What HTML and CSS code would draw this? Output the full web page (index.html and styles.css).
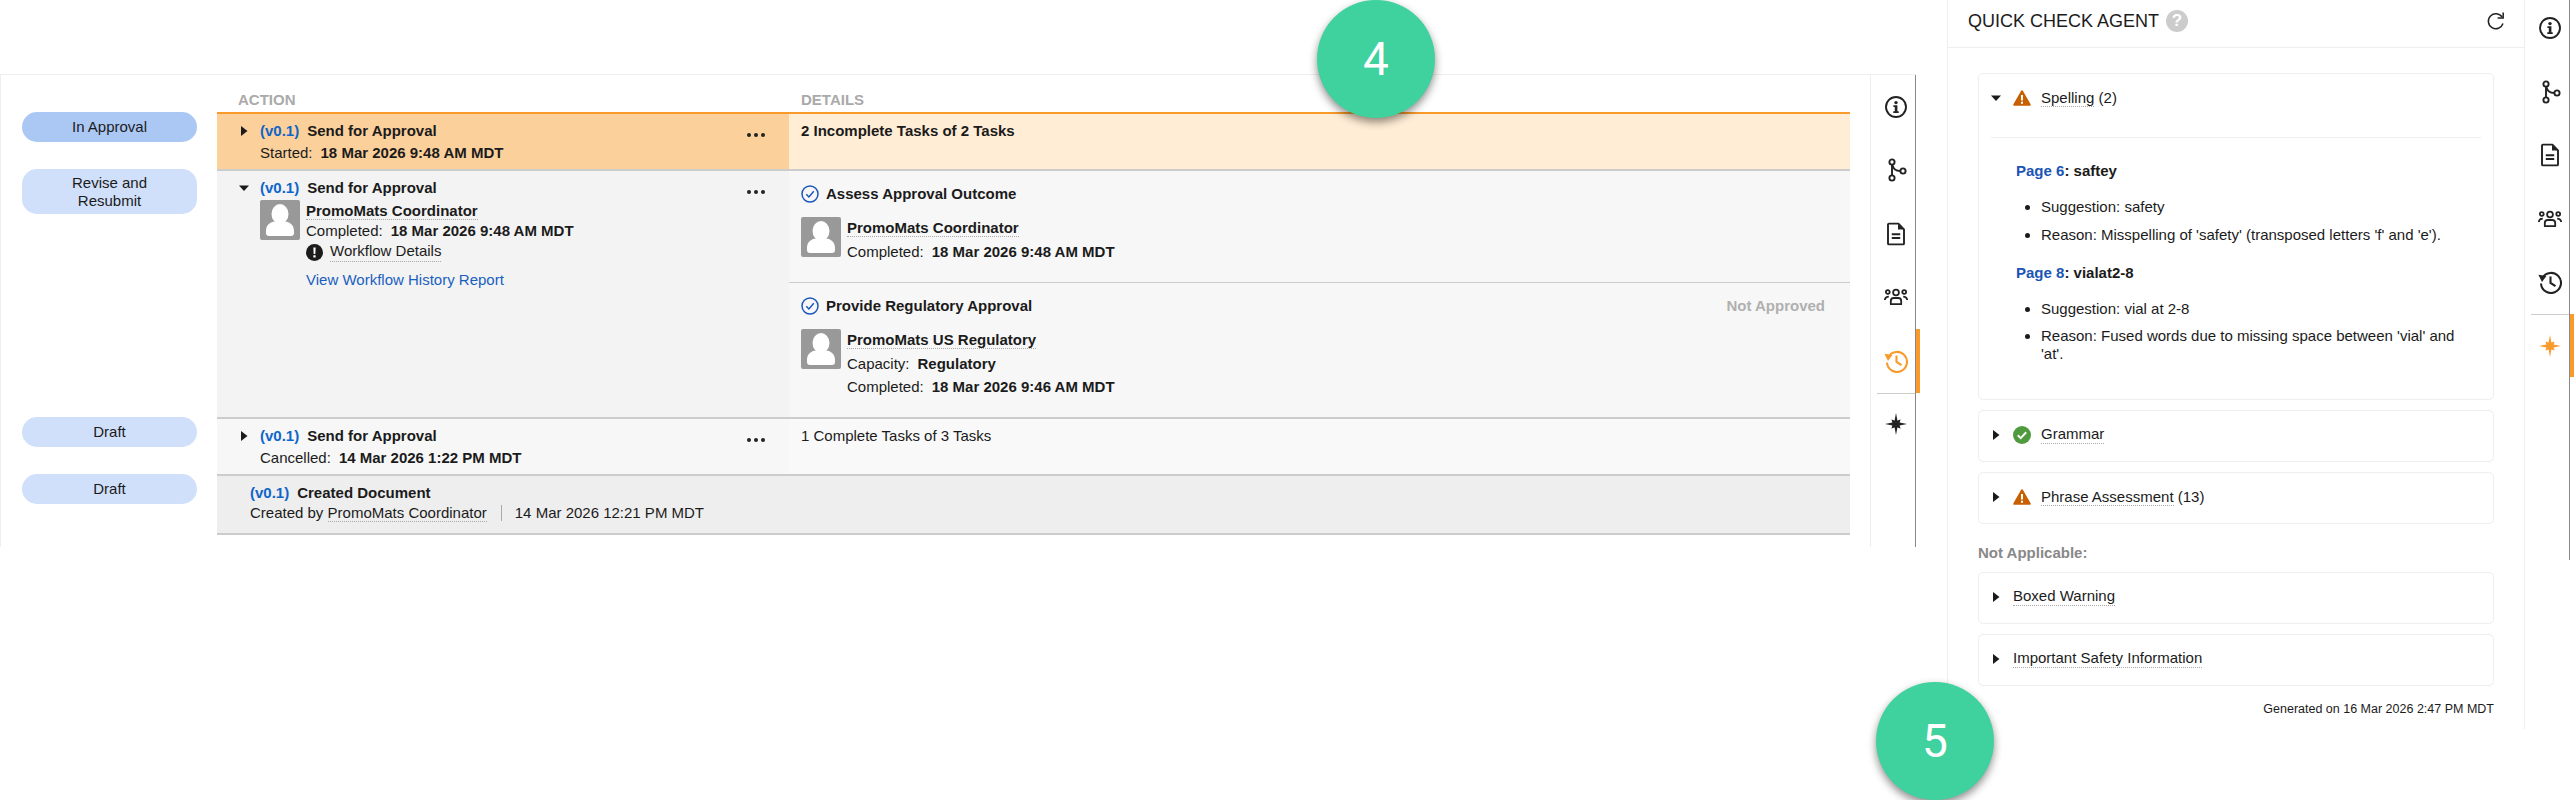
FILE: index.html
```html
<!DOCTYPE html>
<html lang="en">
<head>
<meta charset="utf-8">
<title>Document workflow timeline</title>
<link rel="stylesheet" href="styles.css">
</head>
<body>
<svg class="defs" width="0" height="0" aria-hidden="true">
  <defs>
    <symbol id="i-info" viewBox="0 0 24 24"><circle cx="12" cy="12" r="10" fill="none" stroke="currentColor" stroke-width="1.9"/><circle cx="12" cy="7.6" r="1.7" fill="currentColor"/><path d="M9.4 10.300h4v6h1.300v1.700H9.300v-1.700h1.500v-4.300H9.400z" fill="currentColor"/></symbol>
    <symbol id="i-branch" viewBox="0 0 24 24"><g fill="none" stroke="currentColor" stroke-width="1.900"><circle cx="8" cy="4" r="2.600"/><circle cx="8" cy="20" r="2.600"/><circle cx="19" cy="13" r="2.600"/><path d="M8 6.600v10.800"/><path d="M8.400 6.800c.6 3.600 3 6 8 6.200"/></g></symbol>
    <symbol id="i-doc" viewBox="0 0 24 24"><path d="M5 1.600h9.400L20 7.400v14a1 1 0 0 1-1 1H5a1 1 0 0 1-1-1v-18.800a1 1 0 0 1 1-1z" fill="none" stroke="currentColor" stroke-width="1.900" stroke-linejoin="round"/><path d="M14 2v5.600h5.600z" fill="currentColor"/><path d="M7.800 12.200h8.400M7.800 16h8.400" stroke="currentColor" stroke-width="1.900"/></symbol>
    <symbol id="i-people" viewBox="0 0 24 24"><g fill="none" stroke="currentColor" stroke-width="1.800"><circle cx="12" cy="7.500" r="2.900"/><circle cx="3.800" cy="7" r="1.900"/><circle cx="20.200" cy="7" r="1.900"/><path d="M6.800 19.200v-3.200c0-1.800 1.500-3 3-3h4.400c1.500 0 3 1.200 3 3v3.200z" stroke-linejoin="round"/><path d="M.8 15c.3-2.200 1.600-3.400 4-3.400M23.200 15c-.3-2.200-1.600-3.400-4-3.400"/></g></symbol>
    <symbol id="i-history" viewBox="0 0 24 24"><path d="M4.400 7.800A10 10 0 1 1 3 13.500" fill="none" stroke="currentColor" stroke-width="2.100"/><path d="M.4 4.800l8 1.200-4.400 6z" fill="currentColor"/><path d="M12.500 6.500v6.500l5 3.200" fill="none" stroke="currentColor" stroke-width="2.100"/></symbol>
    <symbol id="i-star" viewBox="0 0 24 24"><path d="M12 1l1.400 7.400 3.200-1-1 3.200L23 12l-7.400 1.400 1 3.200-3.200-1L12 23l-1.400-7.400-3.200 1 1-3.200L1 12l7.400-1.400-1-3.200 3.200 1z" fill="currentColor"/></symbol>
    <symbol id="i-check" viewBox="0 0 18 18"><circle cx="9" cy="9" r="8" fill="none" stroke="currentColor" stroke-width="1.500"/><path d="M5.300 9.200l2.600 2.700 4.900-5.600" fill="none" stroke="currentColor" stroke-width="1.500"/></symbol>
    <symbol id="i-user" viewBox="0 0 40 40"><rect width="40" height="40" rx="2" fill="#999"/><ellipse cx="20" cy="14" rx="8.500" ry="10" fill="#fff"/><path d="M6 31c0-6 4-9 9-9.500 3 2 7 2 10 0 5 .5 9 3.500 9 9.500v2c0 2-1 3-3 3H9c-2 0-3-1-3-3z" fill="#fff"/></symbol>
    <symbol id="i-warn" viewBox="0 0 18 16"><path d="M9 .3c.5 0 .8.3 1 .7l7.600 13.200c.4.800 0 1.500-.9 1.500H1.300c-.9 0-1.300-.7-.9-1.500L8 1c.2-.4.500-.7 1-.7z" fill="#c85f00"/><path d="M8 5h2v5.500H8zM8 11.700h2v2H8z" fill="#fff"/></symbol>
    <symbol id="i-ok" viewBox="0 0 18 18"><circle cx="9" cy="9" r="9" fill="#4e9a3c"/><path d="M4.800 9.300l2.900 2.800 5.500-5.800" fill="none" stroke="#fff" stroke-width="2"/></symbol>
    <symbol id="i-alert" viewBox="0 0 18 18"><circle cx="9" cy="9" r="9" fill="#1b1b1b"/><path d="M7.800 3.800h2.400l-.3 6.800H8.100zM7.800 12h2.400v2.300H7.800z" fill="#fff"/></symbol>
    <symbol id="i-right" viewBox="0 0 10 10"><path d="M2 0l6.500 5L2 10z" fill="currentColor"/></symbol>
    <symbol id="i-down" viewBox="0 0 10 10"><path d="M0 2.500h10L5 8z" fill="currentColor"/></symbol>
  </defs>
</svg>

<div class="page">
  <section class="history">
    <div class="timeline">
      <div class="heads">
        <div class="head head-action">ACTION</div>
        <div class="head head-details">DETAILS</div>
      </div>

      <div class="row">
        <div class="status"><span class="pill pill-active">In Approval</span></div>
        <div class="row-body row-current">
          <div class="action">
            <div class="action-title"><svg class="caret"><use href="#i-right"/></svg><b class="ver">(v0.1)</b><b>Send for Approval</b></div>
            <div class="action-sub">Started:<b>18 Mar 2026 9:48 AM MDT</b></div>
            <span class="dots"><i></i><i></i><i></i></span>
          </div>
          <div class="details summary"><b>2 Incomplete Tasks of 2 Tasks</b></div>
        </div>
      </div>

      <div class="row">
        <div class="status"><span class="pill pill-double">Revise and<br>Resubmit</span></div>
        <div class="row-body row-open">
          <div class="action">
            <div class="action-title"><svg class="caret caret-down"><use href="#i-down"/></svg><b class="ver">(v0.1)</b><b>Send for Approval</b></div>
            <div class="person person-action">
              <svg class="avatar"><use href="#i-user"/></svg>
              <div class="person-lines">
                <div><b class="dotted">PromoMats Coordinator</b></div>
                <div class="tight">Completed:<b class="val">18 Mar 2026 9:48 AM MDT</b></div>
                <div class="tight wf"><svg class="alert"><use href="#i-alert"/></svg><span class="dotted dotted-low">Workflow Details</span></div>
                <a class="link" href="#">View Workflow History Report</a>
              </div>
            </div>
            <span class="dots"><i></i><i></i><i></i></span>
          </div>
          <div class="details tasks">
            <div class="task">
              <div class="task-title"><svg class="check"><use href="#i-check"/></svg><b>Assess Approval Outcome</b></div>
              <div class="person">
                <svg class="avatar"><use href="#i-user"/></svg>
                <div class="person-lines">
                  <div><b class="dotted">PromoMats Coordinator</b></div>
                  <div class="roomy">Completed:<b class="val">18 Mar 2026 9:48 AM MDT</b></div>
                </div>
              </div>
            </div>
            <div class="task task-last">
              <div class="task-title"><svg class="check"><use href="#i-check"/></svg><b>Provide Regulatory Approval</b><b class="verdict">Not Approved</b></div>
              <div class="person">
                <svg class="avatar"><use href="#i-user"/></svg>
                <div class="person-lines">
                  <div><b class="dotted">PromoMats US Regulatory</b></div>
                  <div class="roomy">Capacity:<b class="val">Regulatory</b></div>
                  <div class="snug">Completed:<b class="val">18 Mar 2026 9:46 AM MDT</b></div>
                </div>
              </div>
            </div>
          </div>
        </div>
      </div>

      <div class="row">
        <div class="status"><span class="pill">Draft</span></div>
        <div class="row-body row-past">
          <div class="action">
            <div class="action-title"><svg class="caret"><use href="#i-right"/></svg><b class="ver">(v0.1)</b><b>Send for Approval</b></div>
            <div class="action-sub">Cancelled:<b>14 Mar 2026 1:22 PM MDT</b></div>
            <span class="dots"><i></i><i></i><i></i></span>
          </div>
          <div class="details summary">1 Complete Tasks of 3 Tasks</div>
        </div>
      </div>

      <div class="row">
        <div class="status"><span class="pill">Draft</span></div>
        <div class="row-body row-created">
          <div class="created">
            <div><b class="ver ver-created">(v0.1)</b><b>Created Document</b></div>
            <div class="created-sub">Created by <span class="dotted">PromoMats Coordinator</span><span class="pipe"></span>14 Mar 2026 12:21 PM MDT</div>
          </div>
        </div>
      </div>
    </div>

    <nav class="rail rail-history">
      <a class="rail-item"><svg><use href="#i-info"/></svg></a>
      <a class="rail-item"><svg><use href="#i-branch"/></svg></a>
      <a class="rail-item"><svg><use href="#i-doc"/></svg></a>
      <a class="rail-item"><svg><use href="#i-people"/></svg></a>
      <a class="rail-item rail-active"><svg><use href="#i-history"/></svg></a>
      <a class="rail-item rail-split"><svg><use href="#i-star"/></svg></a>
    </nav>
  </section>

  <section class="agent">
    <header class="agent-head">
      <span class="agent-title">QUICK CHECK AGENT</span>
      <span class="help">?</span>
      <svg class="refresh" viewBox="0 0 20 20"><path d="M16.200 6.200A7.500 7.500 0 1 0 17 12.500" fill="none" stroke="#222" stroke-width="1.500"/><path d="M17.200 1.500v5.600h-5.600" fill="none" stroke="#222" stroke-width="1.500"/></svg>
    </header>
    <div class="agent-body">
      <div class="card">
        <div class="card-head"><svg class="caret-card caret-open"><use href="#i-down"/></svg><svg class="state state-warn"><use href="#i-warn"/></svg><span><span class="dotted">Spelling</span> (2)</span></div>
        <div class="card-content">
          <div class="finding"><b><span class="page-no">Page 6</span>: saftey</b></div>
          <ul class="notes">
            <li>Suggestion: safety</li>
            <li>Reason: Misspelling of 'safety' (transposed letters 'f' and 'e').</li>
          </ul>
          <div class="finding finding-next"><b><span class="page-no">Page 8</span>: vialat2-8</b></div>
          <ul class="notes">
            <li>Suggestion: vial at 2-8</li>
            <li>Reason: Fused words due to missing space between 'vial' and 'at'.</li>
          </ul>
        </div>
      </div>
      <div class="card">
        <div class="card-head"><svg class="caret-card"><use href="#i-right"/></svg><svg class="state"><use href="#i-ok"/></svg><span class="dotted">Grammar</span></div>
      </div>
      <div class="card">
        <div class="card-head"><svg class="caret-card"><use href="#i-right"/></svg><svg class="state state-warn"><use href="#i-warn"/></svg><span><span class="dotted">Phrase Assessment</span> (13)</span></div>
      </div>
      <div class="na-label">Not Applicable:</div>
      <div class="card card-na">
        <div class="card-head"><svg class="caret-card"><use href="#i-right"/></svg><span class="dotted">Boxed Warning</span></div>
      </div>
      <div class="card">
        <div class="card-head"><svg class="caret-card"><use href="#i-right"/></svg><span class="dotted">Important Safety Information</span></div>
      </div>
      <div class="generated">Generated on 16 Mar 2026 2:47 PM MDT</div>
    </div>
  </section>

  <nav class="rail rail-page">
    <a class="rail-item"><svg><use href="#i-info"/></svg></a>
    <a class="rail-item"><svg><use href="#i-branch"/></svg></a>
    <a class="rail-item"><svg><use href="#i-doc"/></svg></a>
    <a class="rail-item"><svg><use href="#i-people"/></svg></a>
    <a class="rail-item"><svg><use href="#i-history"/></svg></a>
    <a class="rail-item rail-split rail-active"><svg><use href="#i-star"/></svg></a>
  </nav>

  <div class="callout callout-4">4</div>
  <div class="callout callout-5">5</div>
</div>
</body>
</html>
```

FILE: styles.css
```css
* { box-sizing: border-box; }
html, body { margin: 0; padding: 0; background: #fff; }
body { font: 15px/18px "Liberation Sans", Arial, sans-serif; color: #1b1b1b; }
.defs { position: absolute; }
.page { position: relative; display: flex; width: 2574px; height: 800px; overflow: hidden; }

/* history panel */
.history { display: flex; flex: none; width: 1916px; height: 473px; margin: 74px 31px 0 0; border-top: 1px solid #eee; border-left: 1px solid #eee; }
.timeline { flex: none; width: 1849px; }
.heads { display: flex; height: 37px; padding: 16px 0 0 216px; font-weight: bold; font-size: 15px; color: #aaa; }
.head-action { width: 572px; padding-left: 21px; }
.head-details { padding-left: 12px; }

.row { display: flex; }
.status { flex: none; width: 216px; padding-left: 21px; }
.pill { display: block; width: 175px; padding: 6px 8px; border-radius: 15px; background: #d0e0fa; text-align: center; }
.pill-double { padding: 5px 8px 4px; }
.pill-active { background: #abc8f5; }
.row-body { display: flex; flex: 1; border-top: 2px solid #ccc; }
.row-current { border-top-color: #f99a2c; }
.row-current .action { background: #fcd09b; }
.row-current .details { background: #ffedd5; }
.row-open .action { background: #f3f3f3; }
.row-open .details { background: #f7f7f7; }
.row-past .action { background: #f7f7f7; }
.row-past .details { background: #f9f9f9; }
.row-created { border-bottom: 2px solid #ccc; background: #eee; }

.action { position: relative; flex: none; width: 572px; padding: 8px 22px 7px; }
.action-title { display: flex; align-items: center; }
.caret { flex: none; width: 10px; height: 10px; margin-right: 11px; color: #1b1b1b; }
.ver { margin-right: 8px; color: #0f66c9; }
.action-sub { margin: 4px 0 0 21px; }
.action-sub b { margin-left: 8px; }
.dots { position: absolute; top: 19px; right: 24px; display: flex; gap: 3px; }
.dots i { width: 4px; height: 4px; border-radius: 50%; background: #222; }

.details { flex: 1; }
.summary { padding: 8px 12px; }
.person { display: flex; }
.avatar { flex: none; width: 40px; height: 40px; margin-right: 6px; }
.person-action { margin: 3px 0 0 21px; }
.person-lines { padding-top: 2px; }
.tight { margin-top: 2px; }
.wf { display: flex; align-items: center; }
.alert { flex: none; width: 17px; height: 17px; margin-right: 7px; }
.dotted { border-bottom: 1px dotted #aaa; }
.dotted-low { padding-bottom: 1px; }
.val { margin-left: 8px; }
.link { display: block; margin-top: 9px; color: #1a5fc0; text-decoration: none; }
.roomy { margin-top: 6px; }
.snug { margin-top: 5px; }

.task { padding: 14px 25px 21px 12px; border-bottom: 1px solid #ccc; }
.task-last { border-bottom: 0; }
.task-title { display: flex; align-items: center; }
.check { flex: none; width: 18px; height: 18px; margin-right: 7px; color: #1c57b8; }
.task .person { margin-top: 14px; }
.verdict { margin-left: auto; color: #b0b0b0; }

.created { padding: 8px 33px 11px; }
.ver-created { color: #0f66c9; }
.created-sub { margin-top: 2px; }
.pipe { display: inline-block; width: 1px; height: 16px; margin: 0 13px 0 14px; background: #aaa; vertical-align: -3px; }

/* rails */
.rail { flex: none; position: relative; display: flex; flex-direction: column; }
.rail-item { position: relative; display: flex; flex: none; align-items: center; justify-content: center; height: 63.5px; padding-left: 6px; color: #222; }
.rail-item svg { width: 24px; height: 24px; }
.rail-active { color: #f99a2c; }
.rail-active::after { content: ""; position: absolute; top: 0; right: -5px; width: 4px; height: 100%; background: #f99a2c; }
.rail-split::before { content: ""; position: absolute; top: 0; left: 6px; right: 0; border-top: 1px solid #ccc; }
.rail-history { width: 46px; height: 472px; margin-left: 20px; border-left: 1px solid #eee; border-right: 1.5px solid #888; }
.rail-page { width: 45px; height: 560px; border-right: 1.5px solid #888; }
.rail-page .rail-item:first-child { margin-top: -3.75px; }

/* agent panel */
.agent { flex: none; width: 578px; height: 729px; border-left: 1px solid #eee; border-right: 1px solid #eee; }
.agent-head { display: flex; align-items: center; height: 48px; padding: 0 18px 5px 20px; border-bottom: 1px solid #eee; }
.agent-title { font-size: 18px; }
.help { display: flex; align-items: center; justify-content: center; width: 22px; height: 22px; margin-left: 7px; border-radius: 50%; background: #ccc; color: #fff; font-weight: bold; font-size: 17px; }
.refresh { width: 20px; height: 20px; margin-left: auto; }
.agent-body { padding: 25px 30px 0; }
.card { margin-bottom: 10px; border: 1px solid #eee; border-radius: 5px; }
.card-head { display: flex; align-items: center; height: 50px; padding: 0 12px 3px; }
.caret-card { flex: none; width: 10px; height: 10px; margin-right: 12px; color: #1b1b1b; }
.state { flex: none; width: 18px; height: 18px; margin-right: 10px; }
.state-warn { height: 16px; }
.card-content { margin: 13px 12px 0; padding: 24px 0 36px 25px; border-top: 1px solid #eee; }
.page-no { color: #1a55b5; }
.finding-next { margin-top: 20px; }
.notes { width: 454px; margin: 18px 0 0; padding: 0 0 0 25px; }
.notes li + li { margin-top: 10px; }
.finding-next + .notes li + li { margin-top: 9px; }
.na-label { margin: 20px 0 10px; font-weight: bold; color: #888; }
.generated { margin-top: 14px; font-size: 12.5px; text-align: right; }

/* overlay callouts */
.callout { position: absolute; display: flex; align-items: center; justify-content: center; width: 118px; height: 118px; border-radius: 50%; background: #3fd19e; box-shadow: 0 4px 8px rgba(0, 0, 0, .45); color: #fff; font: 400 46px/1 Roboto, "Liberation Sans", sans-serif; }
.callout-4 { top: 0; left: 1317px; }
.callout-5 { top: 682px; left: 1876px; }
```
